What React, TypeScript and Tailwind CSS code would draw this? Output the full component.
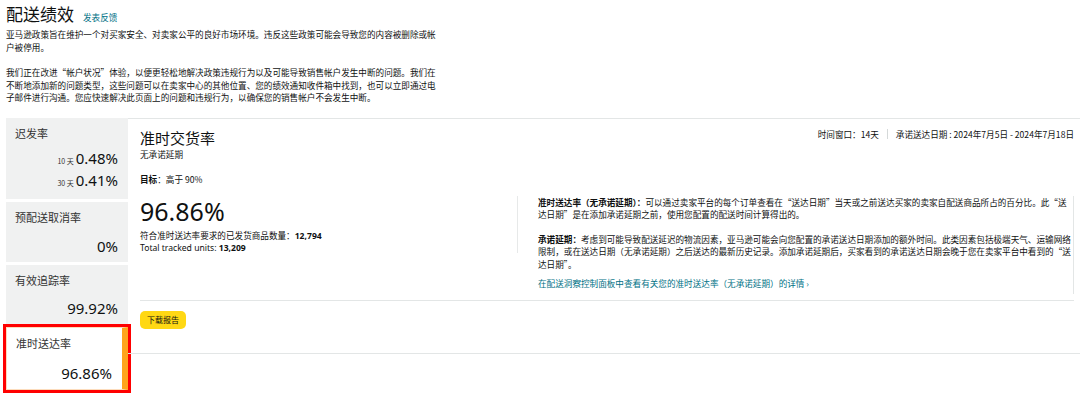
const cjk = "font-['Noto_Sans_CJK_SC',sans-serif]"
const num = "font-['Noto_Sans','Noto_Sans_CJK_SC',sans-serif]"
// full-width quotation marks, as the reference shows them
const fw = "[font-feature-settings:'fwid']"

function SideCard({
  label,
  className,
  children,
}: {
  label: string
  className: string
  children: React.ReactNode
}) {
  return (
    <div className={`flex flex-col justify-between pt-[7px] pl-[9px] pr-[10px] pb-[6px] ${className}`}>
      <div className={`${cjk} text-[11px] leading-[16px] text-[#333]`}>{label}</div>
      <div className={`${num} text-right text-[15px] leading-[19px] text-[#0f1111]`}>{children}</div>
    </div>
  )
}

function Windowed({ days, value }: { days: string; value: string }) {
  return (
    <div className="flex items-baseline justify-end">
      <span className={`${cjk} mr-[2px] text-[7px] text-[#333]`}>{days}</span>
      <span>{value}</span>
    </div>
  )
}

export default function App() {
  return (
    <div className={`${cjk} min-h-[398px] bg-white pt-[3px] pl-[6px] text-[#0f1111]`}>
      <div className="flex items-baseline">
        <h1 className="text-[17px] leading-[22px] font-normal">配送绩效</h1>
        <a className="ml-[9px] text-[8.6px] text-[#007185]">发表反馈</a>
      </div>

      <div className="mt-[3px] w-[432px] text-[8.6px] leading-[12.5px]">
        <p className="mb-[13px]">
          亚马逊政策旨在维护一个对买家安全、对卖家公平的良好市场环境。违反这些政策可能会导致您的内容被删除或帐户被停用。
        </p>
        <p className={fw}>
          我们正在改进“帐户状况”体验，以便更轻松地解决政策违规行为以及可能导致销售帐户发生中断的问题。我们在不断地添加新的问题类型，这些问题可以在卖家中心的其他位置、您的绩效通知收件箱中找到，也可以立即通过电子邮件进行沟通。您应快速解决此页面上的问题和违规行为，以确保您的销售帐户不会发生中断。
        </p>
      </div>

      <div className="mt-[14px] flex items-start">
        <div className="flex w-[122px] shrink-0 flex-col gap-[3px]">
          <SideCard label="迟发率" className="h-[81px] bg-[#f0f1f1]">
            <Windowed days="10 天" value="0.48%" />
            <Windowed days="30 天" value="0.41%" />
          </SideCard>
          <SideCard label="预配送取消率" className="h-[60px] bg-[#f0f1f1]">
            0%
          </SideCard>
          <SideCard label="有效追踪率" className="h-[59px] bg-[#f0f1f1]">
            99.92%
          </SideCard>
          <SideCard
            label="准时送达率"
            className="h-[63px] border border-[#fcdcbc] border-r-[6px] border-r-[#ffa41c] bg-white outline-[3px] outline-solid outline-[#ff0000]"
          >
            96.86%
          </SideCard>
        </div>

        <div className="flex-1 border-y border-[#e3e6e6] pt-[9px] pr-[6px] pb-[24px] pl-3">
          <div className="flex items-start justify-between">
            <div>
              <h2 className="text-[15px] leading-[20px] font-normal">准时交货率</h2>
              <div className="text-[8.6px] leading-[12px]">无承诺延期</div>
            </div>
            <div className="flex items-center text-[8.6px] leading-[12px]">
              <span>时间窗口：14天</span>
              <span className="mx-[8px] h-[10px] w-px bg-[#d5d9d9]" />
              <span>承诺送达日期 : 2024年7月5日 - 2024年7月18日</span>
            </div>
          </div>

          <div className="mt-[13px] text-[8.6px] leading-[12px]">
            <b>目标</b>：高于 90%
          </div>

          <div className="mt-[11px] border-b border-[#e3e6e6] pb-[6px]">
            <div className="flex items-start">
              <div className="w-[377px] shrink-0">
                <div className={`${num} text-[25px] leading-[30px]`}>96.86%</div>
                <div className="mt-[3px] text-[8.6px] leading-[12px]">
                  符合准时送达率要求的已发货商品数量：<b className={num}>12,794</b>
                </div>
                <div className={`${num} text-[8.6px] leading-[12px]`}>
                  Total tracked units: <b>13,209</b>
                </div>
              </div>
              <div className="flex flex-1 items-start border-r border-[#e3e6e6] pb-[5px]">
                <div className="h-[57px] w-px shrink-0 bg-[#e7e9e9]" />
                <div className="flex-1 pl-5 text-[8.6px] leading-[12.5px]">
                  <p className={`mb-[12px] ${fw}`}>
                    <b>准时送达率（无承诺延期）：</b>可以通过卖家平台的每个订单查看在“送达日期”当天或之前送达买家的卖家自配送商品所占的百分比。此“送达日期”是在添加承诺延期之前，使用您配置的配送时间计算得出的。
                  </p>
                  <p className={fw}>
                    <b>承诺延期：</b>考虑到可能导致配送延迟的物流因素，亚马逊可能会向您配置的承诺送达日期添加的额外时间。此类因素包括极端天气、运输网络限制，或在送达日期（无承诺延期）之后送达的最新历史记录。添加承诺延期后，买家看到的承诺送达日期会晚于您在卖家平台中看到的“送达日期”。
                  </p>
                  <a className="mt-[6.5px] block text-[#007185]">
                    在配送洞察控制面板中查看有关您的准时送达率（无承诺延期）的详情 ›
                  </a>
                </div>
              </div>
            </div>
          </div>

          <button className="mt-[10px] h-[18px] rounded-[5px] bg-[#ffd814] px-[7px] text-[8px] leading-[18px] text-[#0f1111]">
            下载报告
          </button>
        </div>
      </div>
    </div>
  )
}
